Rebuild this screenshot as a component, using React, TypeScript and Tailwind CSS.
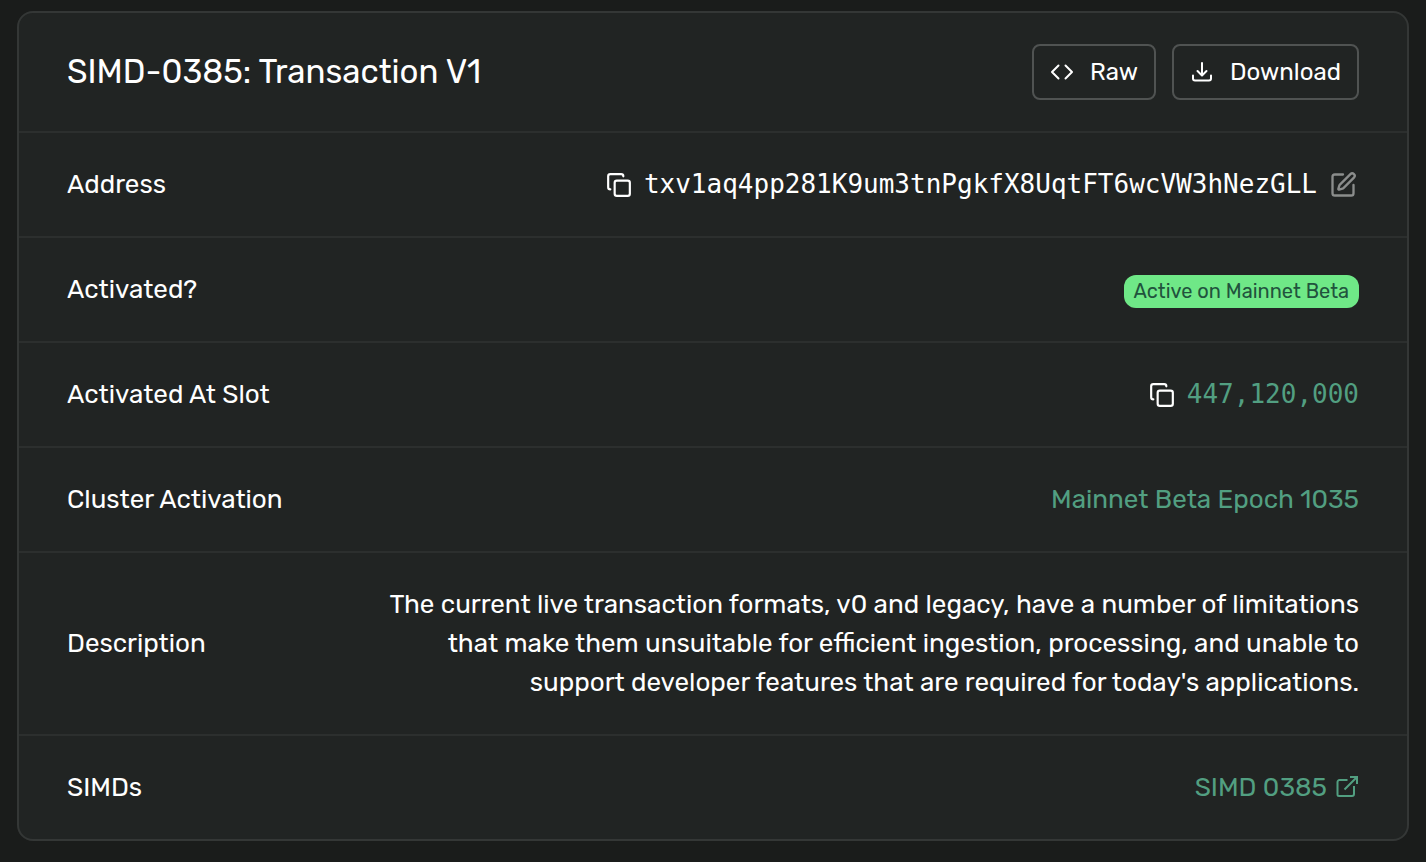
import type { ReactNode } from "react";
import { Copy, SquarePen } from "lucide-react";

const CodeIcon = () => (
  <svg viewBox="0 0 24 24" className="size-6" fill="none" stroke="currentColor" strokeWidth={2} aria-hidden="true">
    <path d="M8.500 5.500 2 12l6.500 6.500M15.500 5.500 22 12l-6.500 6.500" strokeLinecap="round" strokeLinejoin="round" />
  </svg>
);

const DownloadIcon = () => (
  <svg viewBox="0 0 24 24" className="size-6" fill="none" stroke="currentColor" strokeWidth={2} aria-hidden="true">
    <path
      d="M12 3v12M7.500 11 12 15.500l4.500-4.500M3 15.500v3a2 2 0 0 0 2 2h14a2 2 0 0 0 2-2v-3"
      strokeLinecap="round"
      strokeLinejoin="round"
    />
  </svg>
);

const ExternalIcon = () => (
  <svg viewBox="0 0 24 24" className="size-6" fill="none" stroke="currentColor" strokeWidth={2} aria-hidden="true">
    <path d="M12.500 4H4.500A2 2 0 0 0 2.500 6v12.500a1.500 1.500 0 0 0 1.500 1.500h13a2 2 0 0 0 2-2v-8" />
    <path d="M9.500 13.500 21.500 1.500M15 1h7v7" />
  </svg>
);

const CopyButton = ({ label }: { label: string }) => (
  <button type="button" aria-label={label} className="flex">
    <Copy className="size-[26px]" />
  </button>
);

const Row = ({ label, children }: { label: string; children: ReactNode }) => (
  <tr className="border-t-2 border-[#2c2f2e]">
    <th scope="row" className="py-8 pl-12 text-left align-middle font-normal whitespace-nowrap">
      {label}
    </th>
    <td className="py-8 pr-12 pl-12 text-right">{children}</td>
  </tr>
);

const App = () => {
  return (
    <main className="min-h-dvh bg-[#1a1c1b] px-[17px] pt-[11px] pb-[21px] font-[Rubik,Roboto,sans-serif] text-[26px] leading-[39px] text-white">
      <section className="rounded-2xl border-2 border-[#343736] bg-[#212423]">
        <header className="flex items-center justify-between px-12 py-[31px]">
          <h1 className="text-[33px] leading-[40px]">SIMD-0385: Transaction V1</h1>

          <div className="flex gap-4 text-2xl">
            <button type="button" className="flex h-14 items-center gap-4 rounded-lg border-2 border-[#505352] px-4">
              <CodeIcon />
              Raw
            </button>
            <button type="button" className="flex h-14 items-center gap-4 rounded-lg border-2 border-[#505352] px-4">
              <DownloadIcon />
              Download
            </button>
          </div>
        </header>

        <table className="w-full border-collapse">
          <tbody>
            <Row label="Address">
              <div className="flex items-center justify-end gap-3 pr-0.5">
                <CopyButton label="Copy address" />
                <span className="font-['DejaVu_Sans_Mono',monospace]">
                  txv1aq4pp281K9um3tnPgkfX8UqtFT6wcVW3hNezGLL
                </span>
                <button type="button" aria-label="Edit label" className="flex text-[#8b8d8c]">
                  <SquarePen className="size-7" />
                </button>
              </div>
            </Row>

            <Row label="Activated?">
              <div className="flex h-[39px] items-end justify-end pb-px">
                <span className="rounded-xl bg-[#6fe887] px-[10px] text-xl leading-[33px] text-[#21533d]">
                  Active on Mainnet Beta
                </span>
              </div>
            </Row>

            <Row label="Activated At Slot">
              <div className="flex items-center justify-end gap-3">
                <CopyButton label="Copy slot" />
                <a href="#slot" className="font-['DejaVu_Sans_Mono',monospace] text-[#529f81]">
                  447,120,000
                </a>
              </div>
            </Row>

            <Row label="Cluster Activation">
              <a href="#epoch" className="text-[#529f81]">
                Mainnet Beta Epoch 1035
              </a>
            </Row>

            <Row label="Description">
              The current live transaction formats, v0 and legacy, have a number of limitations
              <br />
              that make them unsuitable for efficient ingestion, processing, and unable to
              <br />
              support developer features that are required for today's applications.
            </Row>

            <Row label="SIMDs">
              <a href="#simd-0385" className="flex items-center justify-end gap-2 text-[#529f81]">
                SIMD 0385
                <ExternalIcon />
              </a>
            </Row>
          </tbody>
        </table>
      </section>
    </main>
  );
};

export default App;
